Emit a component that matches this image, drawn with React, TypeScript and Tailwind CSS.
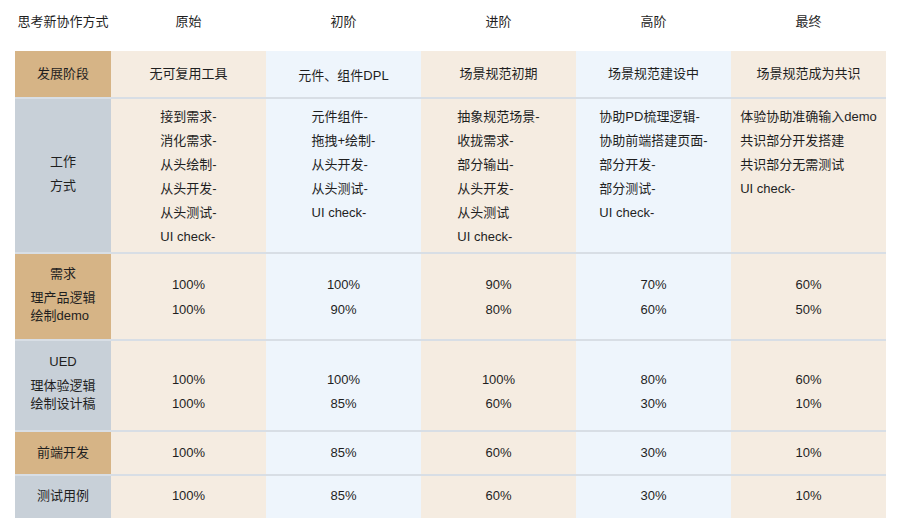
const font = { fontFamily: '"Liberation Sans", "Noto Sans CJK SC", sans-serif' }

const tan = "bg-[#d6b486]"
const slate = "bg-[#c8d0d8]"
const colBg = ["bg-[#f5ece1]", "bg-[#eef5fc]", "bg-[#f5ece1]", "bg-[#eef5fc]", "bg-[#f5ece1]"]

const stages = ["原始", "初阶", "进阶", "高阶", "最终"]

const devStage = ["无可复用工具", "元件、组件DPL", "场景规范初期", "场景规范建设中", "场景规范成为共识"]

const workWays = [
  ["接到需求-", "消化需求-", "从头绘制-", "从头开发-", "从头测试-", "UI check-"],
  ["元件组件-", "拖拽+绘制-", "从头开发-", "从头测试-", "UI check-"],
  ["抽象规范场景-", "收拢需求-", "部分输出-", "从头开发-", "从头测试", "UI check-"],
  ["协助PD梳理逻辑-", "协助前端搭建页面-", "部分开发-", "部分测试-", "UI check-"],
  ["体验协助准确输入demo", "共识部分开发搭建", "共识部分无需测试", "UI check-"],
]

const demand = [["100%", "100%"], ["100%", "90%"], ["90%", "80%"], ["70%", "60%"], ["60%", "50%"]]
const ued = [["100%", "100%"], ["100%", "85%"], ["100%", "60%"], ["80%", "30%"], ["60%", "10%"]]
const frontEnd = ["100%", "85%", "60%", "30%", "10%"]
const testCase = ["100%", "85%", "60%", "30%", "10%"]

const line = "border-t-2 border-[#d8dee5]"

function App() {
  return (
    <div style={font} className="w-[901px] h-[531px] bg-white text-[13px] text-[#1f1f1f]">
      <div className="ml-[15px] h-[44px] grid grid-cols-[96px_repeat(5,155px)] items-center text-center">
        <div>思考新协作方式</div>
        {stages.map((s) => <div key={s}>{s}</div>)}
      </div>

      <div className="ml-[15px] mt-[7px] grid grid-cols-[96px_repeat(5,155px)]">
        {/* 发展阶段 */}
        <div className={`${tan} h-[46px] flex items-center justify-center`}>发展阶段</div>
        {devStage.map((t, i) =>
          <div key={t} className={`${colBg[i]} h-[46px] flex items-center justify-center ${i === 1 ? "pt-[3px]" : ""}`}>{t}</div>
        )}

        {/* 工作方式 */}
        <div className={`${slate} ${line} h-[155px] flex flex-col items-center justify-center pb-[4px] leading-[24px]`}>
          <div>工作</div>
          <div>方式</div>
        </div>
        {workWays.map((rows, i) =>
          <div key={i} className={`${colBg[i]} ${line} h-[155px] flex justify-center pt-[6px] leading-[24px]`}>
            <div>
              {rows.map((r) => <div key={r}>{r}</div>)}
            </div>
          </div>
        )}

        {/* 需求 */}
        <div className={`${tan} ${line} h-[87px] flex flex-col items-center pt-[8px]`}>
          <div className="leading-[24px]">需求</div>
          <div className="mt-[3px] leading-[18px]">
            <div>理产品逻辑</div>
            <div>绘制demo</div>
          </div>
        </div>
        {demand.map((v, i) =>
          <div key={i} className={`${colBg[i]} ${line} h-[87px] flex flex-col items-center pt-[18px] leading-[25px]`}>
            <div>{v[0]}</div>
            <div>{v[1]}</div>
          </div>
        )}

        {/* UED */}
        <div className={`${slate} ${line} h-[91px] flex flex-col items-center pt-[9px]`}>
          <div className="leading-[24px]">UED</div>
          <div className="mt-[3px] leading-[18px]">
            <div>理体验逻辑</div>
            <div>绘制设计稿</div>
          </div>
        </div>
        {ued.map((v, i) =>
          <div key={i} className={`${colBg[i]} ${line} h-[91px] flex flex-col items-center pt-[27px] leading-[24px]`}>
            <div>{v[0]}</div>
            <div>{v[1]}</div>
          </div>
        )}

        {/* 前端开发 */}
        <div className={`${tan} ${line} h-[44px] flex items-center justify-center`}>前端开发</div>
        {frontEnd.map((v, i) =>
          <div key={i} className={`${colBg[i]} ${line} h-[44px] flex items-center justify-center`}>{v}</div>
        )}

        {/* 测试用例 */}
        <div className={`${slate} ${line} h-[44px] flex items-center justify-center pb-[3px]`}>测试用例</div>
        {testCase.map((v, i) =>
          <div key={i} className={`${colBg[i]} ${line} h-[44px] flex items-center justify-center pb-[3px]`}>{v}</div>
        )}
      </div>
    </div>
  )
}

export default App
